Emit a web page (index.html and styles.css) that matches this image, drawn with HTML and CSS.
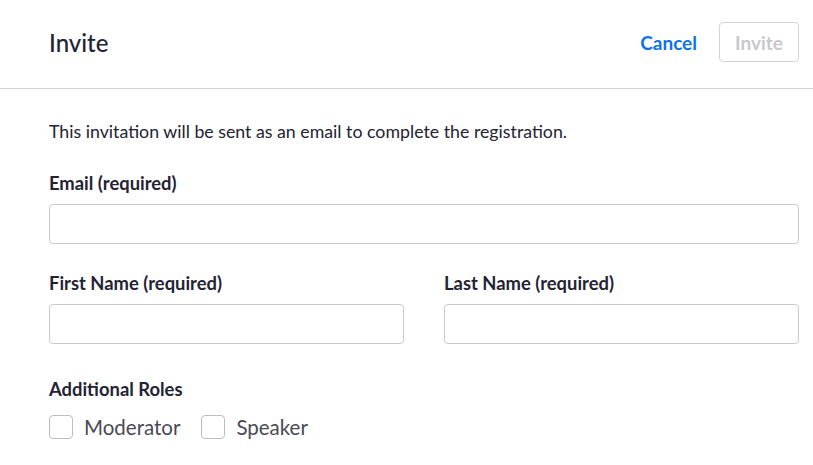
FILE: index.html
```html
<!DOCTYPE html>
<html>
<head>
    <title>Invite</title>
    <link rel="stylesheet" href="styles.css">
</head>
<body>
    <header class="dialog-header">
        <h1>Invite</h1>
        <div class="header-actions">
            <button type="button" class="link-btn">Cancel</button>
            <button type="submit" class="invite-btn" disabled>Invite</button>
        </div>
    </header>

    <form class="dialog-body">
        <p class="intro">This invitation will be sent as an email to complete the registration.</p>

        <div class="field">
            <label for="email">Email (required)</label>
            <input type="email" id="email" name="email">
        </div>

        <div class="field-row">
            <div class="field">
                <label for="firstName">First Name (required)</label>
                <input type="text" id="firstName" name="firstName">
            </div>
            <div class="field">
                <label for="lastName">Last Name (required)</label>
                <input type="text" id="lastName" name="lastName">
            </div>
        </div>

        <div class="roles">
            <span class="roles-title">Additional Roles</span>
            <div class="roles-options">
                <label class="check"><input type="checkbox" name="moderator"><span class="box"></span>Moderator</label>
                <label class="check"><input type="checkbox" name="speaker"><span class="box"></span>Speaker</label>
            </div>
        </div>
    </form>
</body>
</html>
```

FILE: styles.css
```css
body {
    margin: 0;
    font-family: Lato, "Open Sans", sans-serif;
    color: #232333;
    background-color: #FFFFFF;
}

.dialog-header {
    display: flex;
    align-items: center;
    justify-content: space-between;
    height: 89px;
    padding: 0 14px 4px 49px;
    box-sizing: border-box;
    border-bottom: 1px solid #D0D0D5;
}

.dialog-header h1 {
    margin: 0;
    font-size: 24px;
    font-weight: 500;
}

.header-actions {
    display: flex;
    align-items: center;
    gap: 22px;
}

.link-btn {
    border: none;
    background: none;
    padding: 0;
    font-family: inherit;
    font-size: 19px;
    font-weight: 700;
    color: #0E72ED;
    cursor: pointer;
}

.invite-btn {
    width: 80px;
    height: 40px;
    border: 1px solid #D5D5D9;
    border-radius: 4px;
    background: #FFFFFF;
    font-family: inherit;
    font-size: 19px;
    font-weight: 700;
    color: #C8C8CC;
}

.dialog-body {
    width: 750px;
    margin-left: 49px;
    padding-top: 30px;
}

.intro {
    margin: 0 0 28px;
    font-size: 17.75px;
    line-height: 24px;
}

.field {
    display: flex;
    flex-direction: column;
    row-gap: 9px;
    flex: 1;
}

.field label, .roles-title {
    font-size: 18.4px;
    line-height: 24px;
    font-weight: 700;
}

.field input {
    box-sizing: border-box;
    height: 40px;
    border: 1px solid #C9C9CE;
    border-radius: 4px;
    padding: 0 12px;
    font-family: inherit;
    font-size: 16px;
}

.field-row {
    display: flex;
    column-gap: 40px;
    margin-top: 27px;
}

.roles {
    display: flex;
    flex-direction: column;
    row-gap: 14px;
    margin-top: 33px;
}

.roles-options {
    display: flex;
    column-gap: 21px;
}

.check {
    display: flex;
    align-items: center;
    column-gap: 11px;
    font-size: 20.5px;
    line-height: 24px;
    color: #4A4A55;
}

.check input {
    display: none;
}

.box {
    box-sizing: border-box;
    width: 24px;
    height: 24px;
    border: 1px solid #BDBDC2;
    border-radius: 4px;
}
```
